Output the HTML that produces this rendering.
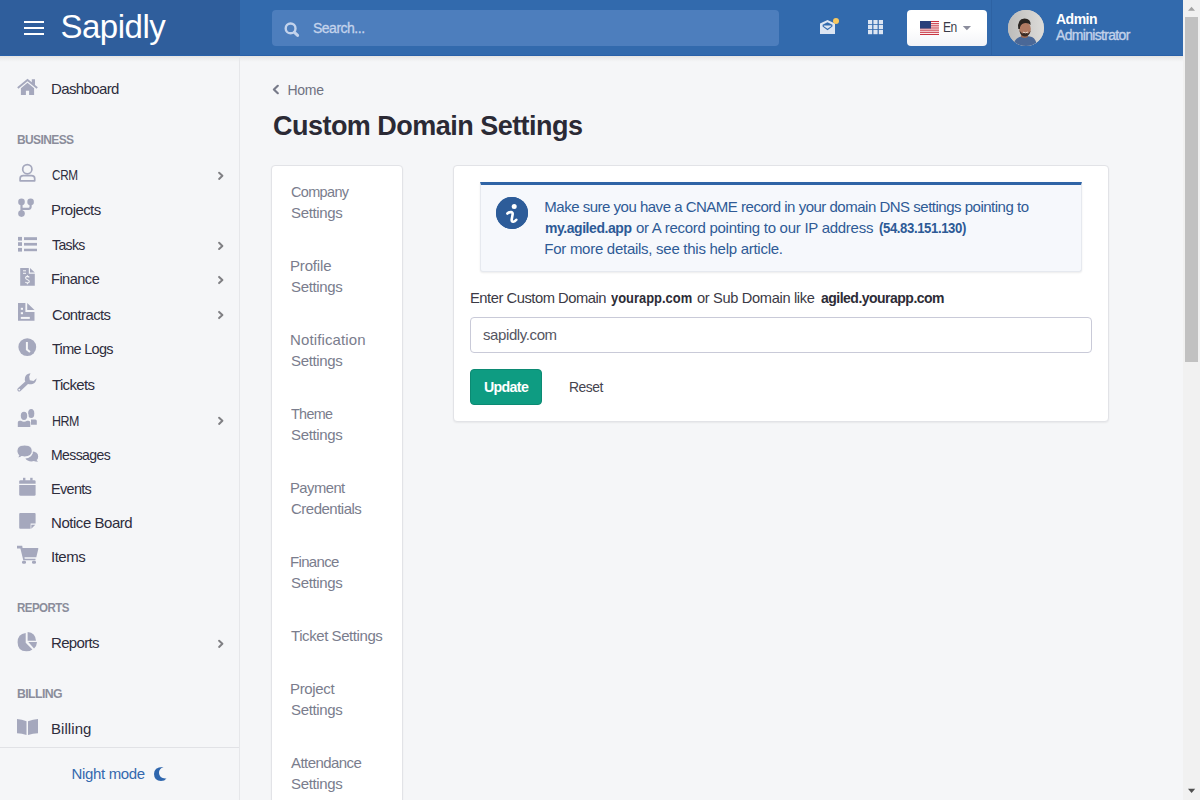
<!DOCTYPE html>
<html><head><meta charset="utf-8">
<style>
*{margin:0;padding:0;box-sizing:border-box}
html,body{width:1200px;height:800px;overflow:hidden;background:#f5f6f8;font-family:"Liberation Sans",sans-serif}
.a{position:absolute}
.t{position:absolute;white-space:nowrap}
.t b{font-weight:bold}
.chev{position:absolute;width:6px;height:6px;border-right:2px solid #7d7f89;border-top:2px solid #7d7f89;transform:rotate(45deg)}
svg{position:absolute;overflow:visible}
</style></head><body>
<div class="a" style="left:0;top:0;width:240px;height:56px;background:#2f5e9c"></div>
<div class="a" style="left:240px;top:0;width:943px;height:56px;background:#326aad"></div>
<div class="a" style="left:0;top:55px;width:1183px;height:1px;background:#2961a9"></div>
<div class="a" style="left:0;top:56px;width:1183px;height:6px;background:linear-gradient(#e5e4e2,#ecedee 40%,#f5f6f8)"></div>
<div class="a" style="left:239px;top:56px;width:1px;height:744px;background:#e6e7ea"></div>
<div class="a" style="left:24px;top:21px;width:20px;height:2px;background:#fff"></div>
<div class="a" style="left:24px;top:27px;width:20px;height:2px;background:#fff"></div>
<div class="a" style="left:24px;top:33px;width:20px;height:2px;background:#fff"></div>
<div class="a" style="left:272px;top:10px;width:507px;height:36px;background:#4d7ebd;border-radius:4px"></div>
<div class="a" style="left:991px;top:0;width:1px;height:55px;background:#2d62a3"></div>
<div class="a" style="left:907px;top:10px;width:80px;height:36px;background:linear-gradient(#fff 50%,#f3f4f7);border-radius:4px"></div>
<div class="a" style="left:1008px;top:10px;width:36px;height:36px;background:#c9c9c9;border-radius:50%"></div>
<div class="a" style="left:0;top:747px;width:239px;height:1px;background:#e1e2e6"></div>
<div class="a" style="left:271px;top:165px;width:132px;height:660px;background:#fff;border:1px solid #e2e3e7;border-radius:4px;box-shadow:0 1px 2px rgba(0,0,0,0.05)"></div>
<div class="a" style="left:453px;top:165px;width:656px;height:257px;background:#fff;border:1px solid #e2e3e7;border-radius:4px;box-shadow:0 1px 2px rgba(0,0,0,0.06)"></div>
<div class="a" style="left:480px;top:182px;width:602px;height:90px;background:#f6f8fc;border:1px solid #e6e9ef;border-top:3px solid #2f64a6;border-radius:0 0 3px 3px;box-shadow:0 1px 2px rgba(0,0,0,0.08)"></div>
<div class="a" style="left:496px;top:197px;width:32px;height:32px;background:#2d5c99;border-radius:50%"></div>
<div class="a" style="left:470px;top:317px;width:622px;height:36px;background:#fff;border:1px solid #c9cad8;border-radius:4px"></div>
<div class="a" style="left:470px;top:369px;width:72px;height:36px;background:#0e9c82;border:1px solid #0c8a73;border-radius:4px"></div>
<svg style="left:0;top:0" width="1200" height="800" viewBox="0 0 1200 800">
<g fill="#a5a8bd">
 <!-- house -->
 <path d="M17.2 87.2 L27.5 78.8 L31.8 82.3 L31.8 79.2 L35 79.2 L35 84.9 L37.8 87.2 L36.6 88.7 L27.5 81.3 L18.4 88.7 Z"/>
 <path d="M20.9 88.2 L27.5 82.8 L34.1 88.2 L34.1 95 L29.1 95 L29.1 90.8 L25.9 90.8 L25.9 95 L20.9 95 Z"/>
 <!-- user outline -->
 <circle cx="27.3" cy="169.2" r="4.6" fill="none" stroke="#a5a8bd" stroke-width="1.7"/>
 <path d="M20.1 180.8 L20.1 178.4 Q20.1 175.6 23.2 175.6 L31.5 175.6 Q34.7 175.6 34.7 178.4 L34.7 180.8 Z" fill="none" stroke="#a5a8bd" stroke-width="1.7" stroke-linejoin="round"/>
 <!-- projects branch -->
 <circle cx="21.5" cy="201.9" r="3.3"/><circle cx="30.6" cy="201.9" r="3.3"/><circle cx="21.5" cy="213.6" r="3.3"/>
 <path d="M21.5 202 L21.5 213" fill="none" stroke="#a5a8bd" stroke-width="2.2"/>
 <path d="M21.5 208.8 L28.6 208.8 Q30.6 208.8 30.6 206.8 L30.6 202" fill="none" stroke="#a5a8bd" stroke-width="2.2"/>
 <!-- tasks list -->
 <rect x="18" y="236.9" width="4" height="3.7"/><rect x="18" y="242.2" width="4" height="3.7"/><rect x="18" y="247.9" width="4" height="3.7"/>
 <rect x="24" y="237.2" width="13" height="2.9"/><rect x="24" y="242.9" width="13" height="2.7"/><rect x="24" y="248.7" width="13" height="2.5"/>
 <!-- finance file dollar -->
 <path d="M20.2 267.9 L28.8 267.9 L28.8 273.7 L34.8 273.7 L34.8 285.8 L20.2 285.8 Z"/>
 <path d="M30 267.9 L34.8 272.5 L30 272.5 Z"/>
 <g stroke="#f5f6f8" stroke-width="1" fill="none"><path d="M23 270.8 L26 270.8 M23 273.3 L26 273.3"/>
 <path d="M29.3 277.3 Q28.5 276.4 27.3 276.4 Q25.5 276.5 25.6 278 Q25.8 279.2 27.5 279.7 Q29.4 280.3 29.3 281.6 Q29.1 283 27.3 282.9 Q26 282.9 25.3 282 M27.4 275.2 L27.4 276.4 M27.4 283 L27.4 284.2" stroke-width="1.1"/></g>
 <!-- contracts -->
 <path d="M18 303 L25.4 303 L25.4 312 L34.5 312 L34.5 320.8 L18 320.8 Z"/>
 <path d="M27.2 303 L34.5 310.1 L27.2 310.1 Z"/>
 <rect x="20.8" y="307.8" width="2.2" height="2" fill="#f5f6f8"/><rect x="20.8" y="312.2" width="2.2" height="2" fill="#f5f6f8"/><rect x="20.8" y="316.9" width="9" height="2" fill="#f5f6f8"/>
 <!-- clock -->
 <circle cx="27.3" cy="347.1" r="8.9"/>
 <path d="M26.9 342 L26.9 349.6 L30 352" fill="none" stroke="#f5f6f8" stroke-width="2"/>
 <!-- wrench -->
 <path d="M30.5 373.2 Q26 373.6 25 377.5 Q24.4 380 25.3 381.6 L17.8 388.3 Q16.6 389.8 17.9 391 Q19.3 392.1 20.6 390.9 L28 384 Q30.2 384.6 32.5 384 Q36.2 382.6 36.6 378.2 L33.5 381 L29.8 380.3 L29.2 376.6 Z"/>
 <circle cx="19.3" cy="389.6" r="0.9" fill="#f5f6f8"/>
 <!-- HRM users -->
 <ellipse cx="31.2" cy="413.5" rx="3.1" ry="4.6"/>
 <path d="M31 419.5 L35.3 419.5 Q36.8 419.5 36.8 421 L36.8 424.8 L31 424.8 Z"/>
 <ellipse cx="24" cy="415.8" rx="3.9" ry="4.8" stroke="#f5f6f8" stroke-width="1.3"/>
 <path d="M17.8 427 L17.8 422.5 Q17.8 421 19.5 420.8 L21 420.8 Q24 422.5 27 420.8 L28.5 420.8 Q30.3 421 30.3 422.5 L30.3 427 Z" stroke="#f5f6f8" stroke-width="0"/>
 <!-- messages -->
 <path d="M31.5 451.2 Q38.2 451.4 38.2 456.5 Q38.2 458.8 36.6 460 L38 461.8 Q35 461.8 33.8 461 Q32.8 461.4 31.5 461.4 Q27 461.4 25.4 458.6 Q31.5 457.8 32.5 453 Z"/>
 <path d="M24.6 445 Q32.4 445 32.4 451 Q32.4 457 24.6 457 Q23 457 21.7 456.6 Q20 458 17 458 L18.7 455.6 Q16.8 453.9 16.8 451 Q16.8 445 24.6 445 Z" stroke="#f5f6f8" stroke-width="1.2"/>
 <!-- events calendar -->
 <rect x="23" y="477.8" width="2.4" height="3"/><rect x="30.2" y="477.8" width="2.4" height="3"/>
 <path d="M19.2 483.7 L19.2 481.6 Q19.2 480.2 20.6 480.2 L34.2 480.2 Q35.6 480.2 35.6 481.6 L35.6 483.7 Z"/>
 <path d="M19.2 485 L35.6 485 L35.6 494.4 Q35.6 495.8 34.2 495.8 L20.6 495.8 Q19.2 495.8 19.2 494.4 Z"/>
 <!-- notice -->
 <path d="M20.2 512.9 L34.6 512.9 Q35.6 512.9 35.6 513.9 L35.6 523.5 L30.6 523.5 L30.6 528.8 L20.2 528.8 Q19.2 528.8 19.2 527.8 L19.2 513.9 Q19.2 512.9 20.2 512.9 Z"/>
 <path d="M31.3 524.8 L35.3 524.8 L31.3 528.8 Z"/>
 <!-- cart -->
 <path d="M17 545.8 L22.2 545.8 L22.6 548 L37.8 548 Q38.6 548.2 38.3 549 L36.3 557.2 L24.5 557.2 L24.7 558.7 L35.5 558.7 L35.5 560.2 L23.3 560.2 L20.4 548.6 L17 548.6 Z"/>
 <rect x="22" y="560.8" width="4" height="3" rx="1.4"/><rect x="32" y="560.8" width="4" height="3" rx="1.4"/>
 <!-- pie -->
 <path d="M25.7 633 L25.7 642.7 L32.4 649.4 Q30 651.3 26.3 651.3 Q17.6 651.3 17.6 642.3 Q17.6 634 25.7 633 Z"/>
 <path d="M27.6 632 Q35.4 632.6 36 640.7 L27.6 640.7 Z"/>
 <path d="M28.3 642 L37 642 Q36.8 646.2 34 648.5 Z"/>
 <!-- billing book -->
 <path d="M17 719 Q22 719.6 26.5 721.2 L26.5 735 Q22 733.4 17 733.2 Z"/>
 <path d="M28 721.2 Q33 719.6 38 719 L38 733.2 Q33 733.4 28 735 Z"/>
</g>
<!-- chevrons sidebar -->
<g fill="none" stroke="#808084" stroke-width="2" stroke-linecap="round" stroke-linejoin="round">
 <path d="M219.1 172.7 L222.4 175.8 L219.1 178.9"/>
 <path d="M219.1 242.8 L222.4 245.9 L219.1 249.0"/>
 <path d="M219.1 276.9 L222.4 280.0 L219.1 283.1"/>
 <path d="M219.1 311.9 L222.4 315.0 L219.1 318.1"/>
 <path d="M219.1 417.7 L222.4 420.8 L219.1 423.9"/>
 <path d="M219.1 640.7 L222.4 643.8 L219.1 646.9"/>
</g>
<!-- breadcrumb chevron -->
<path d="M277.8 85.8 L273.9 89.5 L277.8 93.2" fill="none" stroke="#777a89" stroke-width="2.2" stroke-linecap="round" stroke-linejoin="round"/>
<!-- moon -->
<path d="M163.5 766.9 Q154 766.6 154 774 Q154.2 781 161 781 Q164.6 781 166.5 778.4 Q159.4 779 159 773 Q158.8 768.7 163.5 766.9 Z" fill="#2f66ad"/>
<!-- info -->
<circle cx="512" cy="212.9" r="16" fill="#2d5c99"/>
<circle cx="514.2" cy="206.4" r="2.5" fill="#fff"/>
<path d="M507.4 213.5 Q509 211.9 511.2 212.1 Q513 212.4 512.6 214.6 L511.7 219.5 Q511.4 221.9 513.3 221.7 Q515 221.5 516.3 219.8" fill="none" stroke="#fff" stroke-width="2.6" stroke-linecap="round" stroke-linejoin="round"/>
<!-- search icon -->
<circle cx="290.6" cy="28.4" r="4.9" fill="none" stroke="#c3d3ec" stroke-width="2.4"/>
<path d="M294.4 32.4 L297.6 35.4" stroke="#c3d3ec" stroke-width="3" stroke-linecap="round"/>
<!-- envelope open -->
<path d="M820 23.4 L827.5 19.9 L835 23.4 L835 34 L820 34 Z" fill="#dce5f2"/>
<path d="M822.6 24.7 L827.5 22.3 L832.4 24.7 L832.4 26.6 L827.5 30.2 L822.6 26.6 Z" fill="#326aad"/>
<path d="M823.8 25.6 L831.2 25.6 L831.2 26.2 L827.5 28.7 L823.8 26.2 Z" fill="#dce5f2"/>
<circle cx="836" cy="21" r="3" fill="#f9c85e"/>
<!-- grid -->
<g fill="#dce5f2">
 <rect x="868" y="20" width="4.2" height="4.2"/><rect x="873.4" y="20" width="4.2" height="4.2"/><rect x="878.8" y="20" width="4.2" height="4.2"/>
 <rect x="868" y="25" width="4.2" height="4.2"/><rect x="873.4" y="25" width="4.2" height="4.2"/><rect x="878.8" y="25" width="4.2" height="4.2"/>
 <rect x="868" y="30" width="4.2" height="4.2"/><rect x="873.4" y="30" width="4.2" height="4.2"/><rect x="878.8" y="30" width="4.2" height="4.2"/>
</g>
<!-- flag -->
<rect x="920" y="21" width="19" height="14" fill="#fff"/>
<g fill="#c8313e"><rect x="920" y="21" width="19" height="1.08"/><rect x="920" y="23.15" width="19" height="1.08"/><rect x="920" y="25.3" width="19" height="1.08"/><rect x="920" y="27.45" width="19" height="1.08"/><rect x="920" y="29.6" width="19" height="1.08"/><rect x="920" y="31.75" width="19" height="1.08"/><rect x="920" y="33.9" width="19" height="1.08"/></g>
<rect x="920" y="21" width="11" height="7.55" fill="#2a3f7a"/>
<!-- caret -->
<path d="M962.8 26 L971 26 L966.9 30.3 Z" fill="#8b8d9c"/>
<!-- avatar -->
<defs><clipPath id="av"><circle cx="1026" cy="28" r="18"/></clipPath></defs>
<g clip-path="url(#av)">
 <defs><linearGradient id="avbg" x1="0" y1="0" x2="1" y2="0"><stop offset="0" stop-color="#bdbcba"/><stop offset="1" stop-color="#dddcd9"/></linearGradient></defs>
 <rect x="1008" y="10" width="36" height="36" fill="url(#avbg)"/>
 <path d="M1013 47 Q1013.6 39.5 1019.5 37 L1022 36.2 Q1025 38.5 1028.5 36.2 L1032 37 Q1036.5 39 1037 47 Z" fill="#4a6897"/>
 <path d="M1021 33 L1021 37 Q1024.5 39 1028 37 L1028 33 Z" fill="#9b6a55"/>
 <ellipse cx="1025" cy="29" rx="5.8" ry="7" fill="#b07a62"/>
 <path d="M1018.3 29 Q1017 19 1024.5 18.6 Q1031 18.7 1030.6 25 Q1028 22.4 1024 23.2 Q1020 24.5 1019.8 29 Z" fill="#2a2420"/>
 <path d="M1019.5 30 Q1020 36.4 1025 36.4 Q1029.8 36.2 1030.6 30.5 Q1029.5 33 1027.5 33.6 Q1025 31.8 1022.5 33.6 Q1020.5 32.8 1019.5 30 Z" fill="#3b2c26"/>
 <path d="M1023 32.2 Q1025.6 33.6 1028 32" fill="none" stroke="#e8d5c8" stroke-width="1"/>
</g>
</svg>
<div id="logo" class="t" style="left:60.50px;top:7.00px;font-size:33px;line-height:40px;font-weight:normal;color:#ffffff;letter-spacing:-0.500px">Sapidly</div>
<div id="search" class="t" style="left:313.00px;top:20.01px;font-size:14px;line-height:17px;font-weight:normal;color:#c3d3ec;letter-spacing:-0.500px;-webkit-text-stroke:0.3px #c3d3ec">Search...</div>
<div id="en" class="t" style="left:943.00px;top:18.01px;font-size:15px;line-height:18px;font-weight:normal;color:#3a3a48;letter-spacing:-0.700px;transform:scaleX(0.8035);transform-origin:0 0">En</div>
<div id="admin" class="t" style="left:1056.00px;top:10.76px;font-size:14px;line-height:17px;font-weight:bold;color:#ffffff;letter-spacing:-0.500px">Admin</div>
<div id="adminr" class="t" style="left:1056.00px;top:27.01px;font-size:14px;line-height:17px;font-weight:normal;color:#c3d2ea;letter-spacing:-0.650px;transform:scaleX(0.9947);transform-origin:0 0;-webkit-text-stroke:0.35px #c3d2ea">Administrator</div>
<div id="s_dash" class="t" style="left:51.00px;top:80.01px;font-size:15px;line-height:18px;font-weight:normal;color:#2e2d3d;letter-spacing:-0.625px">Dashboard</div>
<div id="h_bus" class="t" style="left:16.50px;top:132.81px;font-size:12.5px;line-height:15px;font-weight:bold;color:#8b8d9b;letter-spacing:-0.626px;transform:scaleX(0.9591);transform-origin:0 0">BUSINESS</div>
<div id="s_crm" class="t" style="left:52.00px;top:165.61px;font-size:15px;line-height:18px;font-weight:normal;color:#2e2d3d;letter-spacing:-0.380px;transform:scaleX(0.7822);transform-origin:0 0">CRM</div>
<div id="s_proj" class="t" style="left:51.00px;top:201.01px;font-size:15px;line-height:18px;font-weight:normal;color:#2e2d3d;letter-spacing:-0.571px">Projects</div>
<div id="s_tasks" class="t" style="left:52.00px;top:235.51px;font-size:15px;line-height:18px;font-weight:normal;color:#2e2d3d;letter-spacing:-0.700px;transform:scaleX(0.9375);transform-origin:0 0">Tasks</div>
<div id="s_fin" class="t" style="left:51.00px;top:270.01px;font-size:15px;line-height:18px;font-weight:normal;color:#2e2d3d;letter-spacing:-0.546px;transform:scaleX(0.9733);transform-origin:0 0">Finance</div>
<div id="s_con" class="t" style="left:52.00px;top:306.01px;font-size:15px;line-height:18px;font-weight:normal;color:#2e2d3d;letter-spacing:-0.574px;transform:scaleX(0.9898);transform-origin:0 0">Contracts</div>
<div id="s_time" class="t" style="left:52.00px;top:339.61px;font-size:15px;line-height:18px;font-weight:normal;color:#2e2d3d;letter-spacing:-0.700px;transform:scaleX(0.9627);transform-origin:0 0">Time Logs</div>
<div id="s_tick" class="t" style="left:52.00px;top:376.01px;font-size:15px;line-height:18px;font-weight:normal;color:#2e2d3d;letter-spacing:-0.667px">Tickets</div>
<div id="s_hrm" class="t" style="left:52.00px;top:412.32px;font-size:15px;line-height:18px;font-weight:normal;color:#2e2d3d;letter-spacing:-0.579px;transform:scaleX(0.8294);transform-origin:0 0">HRM</div>
<div id="s_msg" class="t" style="left:51.00px;top:445.61px;font-size:15px;line-height:18px;font-weight:normal;color:#2e2d3d;letter-spacing:-0.639px;transform:scaleX(0.9348);transform-origin:0 0">Messages</div>
<div id="s_evt" class="t" style="left:51.00px;top:480.01px;font-size:15px;line-height:18px;font-weight:normal;color:#2e2d3d;letter-spacing:-0.700px;transform:scaleX(0.9639);transform-origin:0 0">Events</div>
<div id="s_notice" class="t" style="left:51.00px;top:513.81px;font-size:15px;line-height:18px;font-weight:normal;color:#2e2d3d;letter-spacing:-0.455px">Notice Board</div>
<div id="s_items" class="t" style="left:51.00px;top:547.51px;font-size:15px;line-height:18px;font-weight:normal;color:#2e2d3d;letter-spacing:-0.500px">Items</div>
<div id="h_rep" class="t" style="left:16.50px;top:601.31px;font-size:12.5px;line-height:15px;font-weight:bold;color:#8b8d9b;letter-spacing:-0.610px;transform:scaleX(0.9232);transform-origin:0 0">REPORTS</div>
<div id="s_rep" class="t" style="left:51.00px;top:634.01px;font-size:15px;line-height:18px;font-weight:normal;color:#2e2d3d;letter-spacing:-0.667px">Reports</div>
<div id="h_bill" class="t" style="left:16.50px;top:687.01px;font-size:12.5px;line-height:15px;font-weight:bold;color:#8b8d9b;letter-spacing:-0.598px;transform:scaleX(0.9826);transform-origin:0 0">BILLING</div>
<div id="s_bill" class="t" style="left:51.00px;top:720.31px;font-size:15px;line-height:18px;font-weight:normal;color:#2e2d3d;letter-spacing:0.067px">Billing</div>
<div id="night" class="t" style="left:71.50px;top:765.01px;font-size:15px;line-height:18px;font-weight:normal;color:#3469ae;letter-spacing:-0.333px">Night mode</div>
<div id="home" class="t" style="left:287.40px;top:81.71px;font-size:14px;line-height:17px;font-weight:normal;color:#6f7282;letter-spacing:-0.267px">Home</div>
<div id="title" class="t" style="left:273.00px;top:110.00px;font-size:27px;line-height:32px;font-weight:bold;color:#2b2a35;letter-spacing:-0.524px">Custom Domain Settings</div>
<div id="n1a" class="t" style="left:291.00px;top:183.01px;font-size:15px;line-height:18px;font-weight:normal;color:#7a7d8d;letter-spacing:-0.665px;transform:scaleX(0.9636);transform-origin:0 0">Company</div>
<div id="n1b" class="t" style="left:291.00px;top:204.01px;font-size:15px;line-height:18px;font-weight:normal;color:#7a7d8d;letter-spacing:-0.343px">Settings</div>
<div id="n2a" class="t" style="left:290.00px;top:257.01px;font-size:15px;line-height:18px;font-weight:normal;color:#7a7d8d;letter-spacing:-0.167px">Profile</div>
<div id="n2b" class="t" style="left:291.00px;top:278.01px;font-size:15px;line-height:18px;font-weight:normal;color:#7a7d8d;letter-spacing:-0.343px">Settings</div>
<div id="n3a" class="t" style="left:290.00px;top:331.01px;font-size:15px;line-height:18px;font-weight:normal;color:#7a7d8d;letter-spacing:0.127px">Notification</div>
<div id="n3b" class="t" style="left:291.00px;top:352.01px;font-size:15px;line-height:18px;font-weight:normal;color:#7a7d8d;letter-spacing:-0.343px">Settings</div>
<div id="n4a" class="t" style="left:291.00px;top:405.01px;font-size:15px;line-height:18px;font-weight:normal;color:#7a7d8d;letter-spacing:-0.674px;transform:scaleX(0.9568);transform-origin:0 0">Theme</div>
<div id="n4b" class="t" style="left:291.00px;top:426.01px;font-size:15px;line-height:18px;font-weight:normal;color:#7a7d8d;letter-spacing:-0.343px">Settings</div>
<div id="n5a" class="t" style="left:290.00px;top:479.01px;font-size:15px;line-height:18px;font-weight:normal;color:#7a7d8d;letter-spacing:-0.531px;transform:scaleX(0.9854);transform-origin:0 0">Payment</div>
<div id="n5b" class="t" style="left:291.00px;top:500.01px;font-size:15px;line-height:18px;font-weight:normal;color:#7a7d8d;letter-spacing:-0.500px">Credentials</div>
<div id="n6a" class="t" style="left:290.00px;top:553.01px;font-size:15px;line-height:18px;font-weight:normal;color:#7a7d8d;letter-spacing:-0.667px">Finance</div>
<div id="n6b" class="t" style="left:291.00px;top:574.01px;font-size:15px;line-height:18px;font-weight:normal;color:#7a7d8d;letter-spacing:-0.343px">Settings</div>
<div id="n7a" class="t" style="left:291.00px;top:627.01px;font-size:15px;line-height:18px;font-weight:normal;color:#7a7d8d;letter-spacing:-0.429px">Ticket Settings</div>
<div id="n8a" class="t" style="left:290.00px;top:680.01px;font-size:15px;line-height:18px;font-weight:normal;color:#7a7d8d;letter-spacing:-0.333px">Project</div>
<div id="n8b" class="t" style="left:291.00px;top:701.01px;font-size:15px;line-height:18px;font-weight:normal;color:#7a7d8d;letter-spacing:-0.343px">Settings</div>
<div id="n9a" class="t" style="left:291.00px;top:754.01px;font-size:15px;line-height:18px;font-weight:normal;color:#7a7d8d;letter-spacing:-0.556px">Attendance</div>
<div id="n9b" class="t" style="left:291.00px;top:775.01px;font-size:15px;line-height:18px;font-weight:normal;color:#7a7d8d;letter-spacing:-0.343px">Settings</div>
<div id="al1" class="t" style="left:544.30px;top:198.00px;font-size:15px;line-height:18px;font-weight:normal;color:#2f5b96;letter-spacing:-0.494px">Make sure you have a CNAME record in your domain DNS settings pointing to</div>
<div id="al2a" class="t" style="left:545.00px;top:219.01px;font-size:15px;line-height:18px;font-weight:bold;color:#2d5a96;letter-spacing:-0.467px;transform:scaleX(0.9316);transform-origin:0 0">my.agiled.app</div>
<div id="al2b" class="t" style="left:636.00px;top:219.01px;font-size:15px;line-height:18px;font-weight:normal;color:#2f5b96;letter-spacing:-0.270px">or A record pointing to our IP address</div>
<div id="al2c" class="t" style="left:879.00px;top:219.01px;font-size:15px;line-height:18px;font-weight:bold;color:#2d5a96;letter-spacing:-0.456px;transform:scaleX(0.8770);transform-origin:0 0">(54.83.151.130)</div>
<div id="al3" class="t" style="left:544.30px;top:240.01px;font-size:15px;line-height:18px;font-weight:normal;color:#2f5b96;letter-spacing:-0.272px">For more details, see this help article.</div>
<div id="labela" class="t" style="left:470.00px;top:289.00px;font-size:15px;line-height:18px;font-weight:normal;color:#3b3a45;letter-spacing:-0.485px;transform:scaleX(0.9833);transform-origin:0 0">Enter Custom Domain</div>
<div id="labelb" class="t" style="left:611.00px;top:289.00px;font-size:15px;line-height:18px;font-weight:bold;color:#2d2c36;letter-spacing:-0.004px;transform:scaleX(0.8617);transform-origin:0 0">yourapp.com</div>
<div id="labelc" class="t" style="left:697.00px;top:289.00px;font-size:15px;line-height:18px;font-weight:normal;color:#3b3a45;letter-spacing:-0.338px;transform:scaleX(0.9744);transform-origin:0 0">or Sub Domain like</div>
<div id="labeld" class="t" style="left:821.00px;top:289.00px;font-size:15px;line-height:18px;font-weight:bold;color:#2d2c36;letter-spacing:-0.549px;transform:scaleX(0.9334);transform-origin:0 0">agiled.yourapp.com</div>
<div id="inp" class="t" style="left:483.00px;top:326.21px;font-size:15px;line-height:18px;font-weight:normal;color:#555562;letter-spacing:-0.400px">sapidly.com</div>
<div id="upd" class="t" style="left:483.50px;top:378.01px;font-size:15px;line-height:18px;font-weight:bold;color:#ffffff;letter-spacing:-0.700px;transform:scaleX(0.9467);transform-origin:0 0">Update</div>
<div id="reset" class="t" style="left:568.70px;top:378.01px;font-size:15px;line-height:18px;font-weight:normal;color:#45444f;letter-spacing:-0.511px;transform:scaleX(0.9262);transform-origin:0 0">Reset</div><div class="a" style="left:1183px;top:0;width:17px;height:800px;background:#f1f1f1"></div>
<div class="a" style="left:1185px;top:17px;width:13px;height:345px;background:#c1c1c1"></div>
<svg style="left:0;top:0" width="1200" height="800"><path d="M1188 10.8 L1191.5 6.8 L1195 10.8 Z" fill="#a3a3a3"/><path d="M1188 788.8 L1195.2 788.8 L1191.6 793 Z" fill="#505050"/></svg>
</body></html>
